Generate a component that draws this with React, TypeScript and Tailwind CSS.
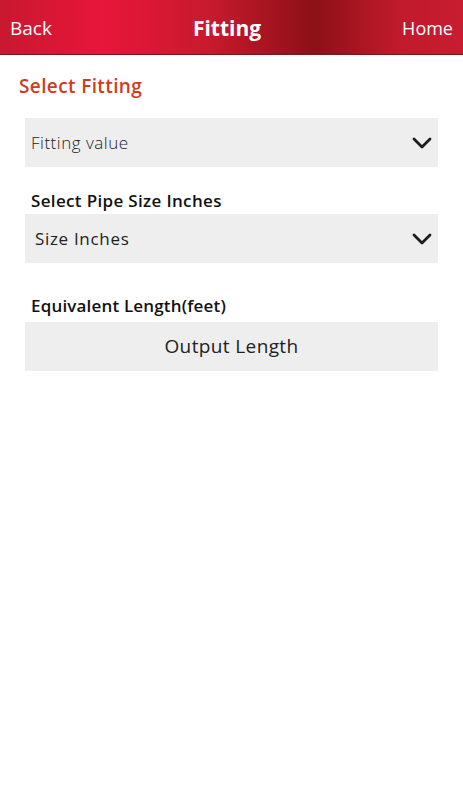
import { ChevronDown } from "lucide-react";

const FONT = { fontFamily: "'Open Sans', 'Noto Sans', 'Liberation Sans', sans-serif" };

function SelectBox({ text, className }: { text: string; className: string }) {
  return (
    <div className="mx-[25px] flex h-[49px] items-center justify-between bg-[#eeeeee]">
      <span className={className}>{text}</span>
      <ChevronDown size={32} strokeWidth={2.1} className="text-[#1c1c1c]" />
    </div>
  );
}

export default function App() {
  return (
    <div className="min-h-[800px] w-full bg-white" style={FONT}>
      <header className="flex h-[55px] items-center justify-between border-b border-[#7a1420] bg-[linear-gradient(90deg,#c8182f_0%,#e8163a_22%,#c81a2e_45%,#8c1016_68%,#bf1a2b_85%,#c81c30_100%)] px-[10px] pt-[3px] text-white">
        <span className="text-[19px] font-medium">Back</span>
        <span className="text-[21px] font-bold">Fitting</span>
        <span className="text-[18px] font-medium">Home</span>
      </header>

      <div className="mt-[17px] flex h-[28px] items-center px-[19px] text-[19px] font-semibold tracking-[0.02em] text-[#d23b1e]">Select Fitting</div>

      <div className="mt-[18px]">
        <SelectBox text="Fitting value" className="pl-[6px] text-[17px] font-light tracking-[0.03em] text-[#222]" />
      </div>

      <div className="mt-[21px] flex h-[26px] items-center px-[31px] text-[17px] font-semibold tracking-[0.02em] text-[#111]">Select Pipe Size Inches</div>
      <div>
        <SelectBox text="Size Inches" className="pl-[10px] text-[17px] tracking-[0.04em] text-[#222]" />
      </div>

      <div className="mt-[30px] flex h-[26px] items-center px-[31px] text-[17px] font-semibold tracking-[0.01em] text-[#111]">Equivalent Length(feet)</div>
      <div className="mx-[25px] mt-[3px] flex h-[49px] items-center justify-center bg-[#eeeeee] text-[19px] tracking-[0.02em] text-[#222]">
        Output Length
      </div>
    </div>
  );
}
